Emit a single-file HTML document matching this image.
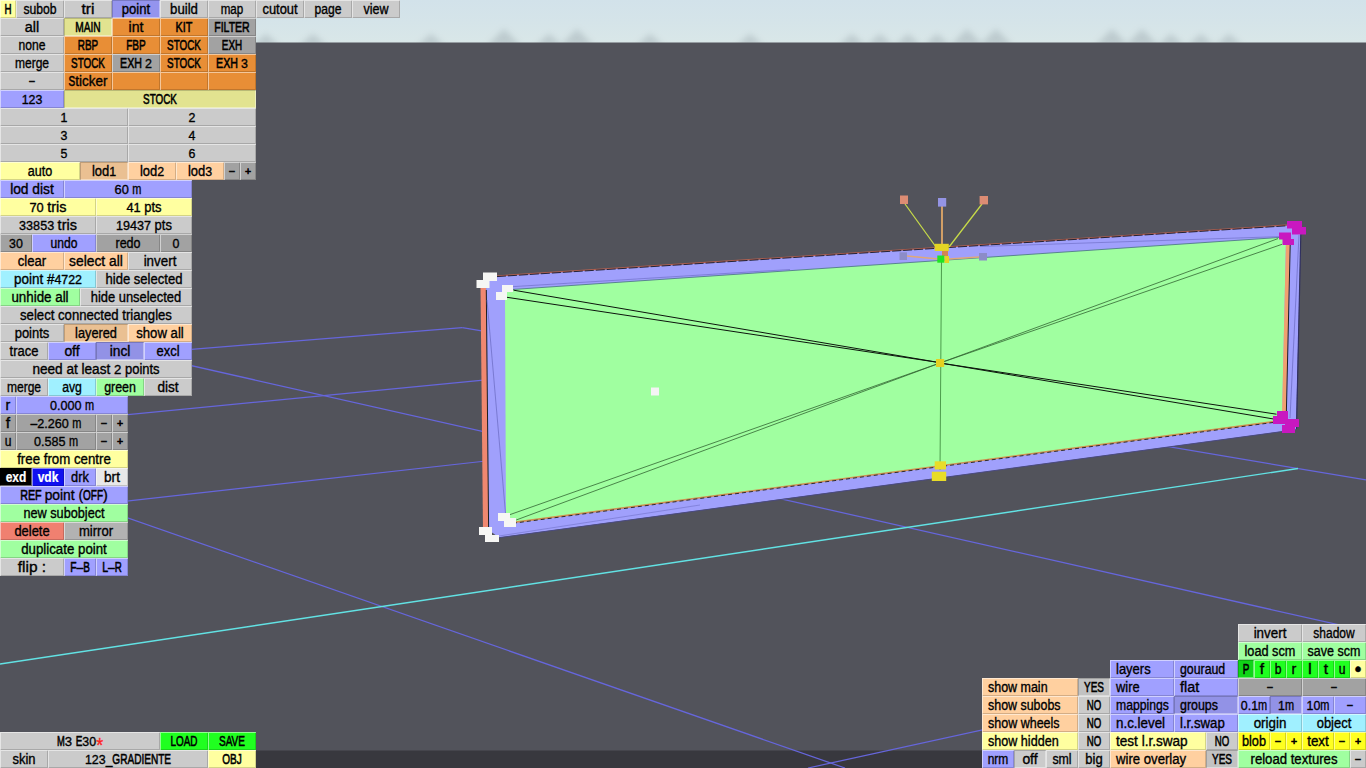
<!DOCTYPE html><html><head><meta charset="utf-8"><title>editor</title><style>

html,body{margin:0;padding:0;}
body{width:1366px;height:768px;overflow:hidden;position:relative;background:#52535b;font-family:"Liberation Sans","DejaVu Sans",sans-serif;}
#scene,#txt{position:absolute;left:0;top:0;width:1366px;height:768px;}
#txt text{font-family:"Liberation Sans","DejaVu Sans",sans-serif;white-space:pre;stroke:#000;stroke-width:.35px;paint-order:stroke;}
#txt .u{stroke-width:.55px;}
#txt .x{stroke-width:.6px;}
#txt text[font-weight]{stroke:#fff;stroke-width:.2px;}
.b{position:absolute;height:18px;box-sizing:border-box;
 box-shadow:inset 1px 1px 0 rgba(255,255,255,.5), inset -1px -1px 0 rgba(0,0,0,.17);}
.b.in{box-shadow:inset 1px 1px 0 rgba(0,0,0,.18), inset -1px -1px 0 rgba(255,255,255,.4);}
.g{background:#cbcbcb;}
.dg{background:#a2a2a2;}
.mg{background:#b2b2b2;}
.g2{background:#c2c2c2;}
.y{background:#ffffa0;}
.k{background:#e2e390;}
.o{background:#e88e36;}
.p{background:#a0a0ff;}
.dp{background:#9292e6;}
.p2{background:#9494ee;}
.pe{background:#ffd0a0;}
.dpe{background:#eac092;}
.c{background:#a0f0ff;}
.lg{background:#a0ffa0;}
.bg{background:#20ff20;}
.dbg{background:#10d418;}
.r{background:#f08070;}
.by{background:#ffff20;}
.bk{background:#000000;}
.bl{background:#1010f0;}
.lt{background:#e8e8e8;}

</style></head><body>
<svg id="scene" width="1366" height="768" viewBox="0 0 1366 768">
<defs>
<linearGradient id="sky" x1="0" y1="0" x2="0" y2="1"><stop offset="0" stop-color="#d2e2ea"/><stop offset="0.5" stop-color="#d5e4e9"/><stop offset="1" stop-color="#d9e7e8"/></linearGradient>
<filter id="bl" x="-20%" y="-50%" width="140%" height="200%"><feGaussianBlur stdDeviation="3.2"/></filter>
</defs>
<rect x="0" y="0" width="1366" height="768" fill="#52535b"/>
<rect x="0" y="0" width="1366" height="43" fill="url(#sky)"/>
<g filter="url(#bl)" fill="#98a4aa" opacity="0.42"><polygon points="252,46 266,34 280,46"/><polygon points="299,46 313,34 327,46"/><polygon points="417,46 431,34 445,46"/><polygon points="487,46 504,29 521,46"/><polygon points="535,46 549,34 563,46"/><polygon points="560,46 577,29 594,46"/><polygon points="636,46 650,34 664,46"/><polygon points="736,46 750,34 764,46"/><polygon points="838,46 852,34 866,46"/><polygon points="866,46 880,34 894,46"/><polygon points="894,46 908,34 922,46"/><polygon points="923,46 937,34 951,46"/><polygon points="950,46 967,29 984,46"/><polygon points="979,46 996,29 1013,46"/><polygon points="1095,46 1112,29 1129,46"/><polygon points="1125,46 1142,29 1159,46"/><polygon points="1157,46 1171,34 1185,46"/><polygon points="1187,46 1201,34 1215,46"/><polygon points="1215,46 1229,34 1243,46"/></g>
<rect x="0" y="42.5" width="1366" height="726" fill="#52535b"/>
<rect x="0" y="750.5" width="1366" height="18" fill="#38383e"/>
<line x1="0" y1="364.8" x2="462.3" y2="327.6" stroke="#6666dc" stroke-width="1.25" />
<line x1="0" y1="427.1" x2="486" y2="379.8" stroke="#6666dc" stroke-width="1.25" />
<line x1="0" y1="515.3" x2="486" y2="461" stroke="#6666dc" stroke-width="1.25" />
<line x1="462.3" y1="327.6" x2="1366" y2="480" stroke="#6666dc" stroke-width="1.25" />
<line x1="0" y1="322.4" x2="1366" y2="631" stroke="#6666dc" stroke-width="1.25" />
<line x1="0" y1="473.4" x2="845" y2="768" stroke="#6666dc" stroke-width="1.25" />
<line x1="808" y1="768" x2="1366" y2="646" stroke="#6666dc" stroke-width="1.25" />
<line x1="0" y1="664" x2="1298" y2="468.5" stroke="#62e2e4" stroke-width="1.4" />
<polygon points="480.5,286 486,277 488.5,530 483,530" fill="#f08870"/>
<polygon points="486,277 1301,224.6 1296,429.5 499,537.5 488.5,530" fill="#a0a0fc"/>
<line x1="486" y1="276.6" x2="1301" y2="224.2" stroke="#b06050" stroke-width="1.2" />
<line x1="486" y1="277.3" x2="1301" y2="224.9" stroke="#181828" stroke-width="0.9" stroke-dasharray="9 2"/>
<line x1="499" y1="537.7" x2="1296" y2="429.7" stroke="#4a4a80" stroke-width="1" />
<line x1="1301" y1="225" x2="1296.5" y2="429" stroke="#303060" stroke-width="1.2" />
<polygon points="505,290 1286,237 1282,420.5 506,523.4" fill="#a0ffa0"/>
<polygon points="1286,240 1290,240 1286,415 1282,415" fill="#f0a070"/>
<line x1="1290.3" y1="240" x2="1286.3" y2="415" stroke="#202020" stroke-width="1" />
<line x1="486.3" y1="290" x2="488.6" y2="527" stroke="#202020" stroke-width="1" />
<line x1="505" y1="290" x2="1286" y2="237" stroke="#507c88" stroke-width="0.9" />
<line x1="506" y1="523.4" x2="1282" y2="420.5" stroke="#d09050" stroke-width="1.6" />
<line x1="506" y1="524.2" x2="1282" y2="421.3" stroke="#202020" stroke-width="0.9" stroke-dasharray="4 3"/>
<line x1="487" y1="300" x2="505.5" y2="513" stroke="#6868c0" stroke-width="0.7" />
<line x1="1299" y1="235" x2="1290" y2="418" stroke="#6868c0" stroke-width="0.7" />
<line x1="513.6" y1="290.2" x2="939.5" y2="362.6" stroke="#0c140c" stroke-width="1" />
<line x1="505" y1="297" x2="939.5" y2="362.6" stroke="#0c140c" stroke-width="1" />
<line x1="940" y1="363" x2="1276.5" y2="414.2" stroke="#0c140c" stroke-width="1" />
<line x1="940" y1="363" x2="1273.6" y2="419" stroke="#0c140c" stroke-width="1" />
<line x1="940" y1="363" x2="1278" y2="238.6" stroke="#2c5c2c" stroke-width="0.75" />
<line x1="940" y1="363" x2="1282" y2="244.3" stroke="#2c5c2c" stroke-width="0.75" />
<line x1="510" y1="514.6" x2="940" y2="363" stroke="#2c5c2c" stroke-width="0.75" />
<line x1="516.2" y1="520" x2="940" y2="363" stroke="#2c5c2c" stroke-width="0.75" />
<line x1="507" y1="287" x2="790" y2="269.5" stroke="#7070c8" stroke-width="0.7" />
<line x1="1283" y1="236.5" x2="980" y2="246.5" stroke="#7070c8" stroke-width="0.7" />
<line x1="499" y1="536" x2="700" y2="505" stroke="#7070c8" stroke-width="0.6" />
<line x1="941.5" y1="262" x2="940" y2="470" stroke="#4c9c4c" stroke-width="1" />
<line x1="905" y1="204" x2="936" y2="247" stroke="#c8dc48" stroke-width="1.25" />
<line x1="982" y1="204" x2="949" y2="247" stroke="#c8dc48" stroke-width="1.25" />
<line x1="942" y1="206" x2="942" y2="246" stroke="#e0a868" stroke-width="1.8" />
<line x1="907" y1="256" x2="938" y2="259" stroke="#e0a878" stroke-width="1.3" />
<line x1="949" y1="259" x2="979" y2="257" stroke="#e0a878" stroke-width="1.3" />
<rect x="900" y="195.5" width="8.0" height="8.5" fill="#dc8c74"/>
<rect x="979.6" y="196" width="8.4" height="8.4" fill="#dc8c74"/>
<rect x="938" y="198" width="8.2" height="8.6" fill="#9494e4"/>
<rect x="899.5" y="252.3" width="7.5" height="7.7" fill="#8c8cc8"/>
<rect x="979" y="253" width="8.0" height="7.5" fill="#8c8cc8"/>
<rect x="934.7" y="243.8" width="14.1" height="7.2" fill="#e4d424"/>
<rect x="942" y="251" width="6.0" height="5.0" fill="#d48454"/>
<rect x="937.3" y="255.5" width="7.2" height="7.2" fill="#20e424"/>
<rect x="944.5" y="256" width="4.5" height="7.0" fill="#e4d424"/>
<rect x="936" y="359" width="8.2" height="8.0" fill="#e4d020"/>
<rect x="934.7" y="461.3" width="11.3" height="8.2" fill="#e8dc28"/>
<rect x="931.8" y="471.7" width="14.4" height="9.3" fill="#e8dc28"/>
<rect x="651" y="387.5" width="8.0" height="8.0" fill="#f4f4f4"/>
<rect x="483" y="272.5" width="14.0" height="8.5" fill="#f6f6f4"/>
<rect x="476.5" y="280" width="13.0" height="8.0" fill="#f6f6f4"/>
<rect x="502" y="285" width="11.0" height="7.0" fill="#f6f6f4"/>
<rect x="496" y="292" width="11.0" height="8.0" fill="#f6f6f4"/>
<rect x="479" y="527" width="13.0" height="8.0" fill="#f6f6f4"/>
<rect x="485" y="535" width="14.0" height="7.0" fill="#f6f6f4"/>
<rect x="498" y="513" width="12.0" height="8.0" fill="#f6f6f4"/>
<rect x="504" y="518" width="12.0" height="9.0" fill="#f6f6f4"/>
<rect x="1287" y="221" width="15.0" height="7.5" fill="#c818c0"/>
<rect x="1292" y="227" width="14.0" height="7.5" fill="#c818c0"/>
<rect x="1279" y="232.5" width="12.0" height="7.0" fill="#c818c0"/>
<rect x="1282.5" y="239" width="11.5" height="6.0" fill="#c818c0"/>
<rect x="1277" y="411" width="11.0" height="8.0" fill="#c818c0"/>
<rect x="1273" y="416" width="12.0" height="8.0" fill="#c818c0"/>
<rect x="1285" y="419" width="14.0" height="8.0" fill="#c818c0"/>
<rect x="1282" y="425" width="13.0" height="8.0" fill="#c818c0"/>
</svg>
<div class="b y" style="left:0px;top:0px;width:16px"></div>
<div class="b g" style="left:16px;top:0px;width:48px"></div>
<div class="b g" style="left:64px;top:0px;width:48px"></div>
<div class="b p2 in" style="left:112px;top:0px;width:48px"></div>
<div class="b g" style="left:160px;top:0px;width:48px"></div>
<div class="b g" style="left:208px;top:0px;width:48px"></div>
<div class="b g" style="left:256px;top:0px;width:48px"></div>
<div class="b g" style="left:304px;top:0px;width:48px"></div>
<div class="b g" style="left:352px;top:0px;width:48px"></div>
<div class="b g" style="left:0px;top:18px;width:64px"></div>
<div class="b k in" style="left:64px;top:18px;width:48px"></div>
<div class="b o" style="left:112px;top:18px;width:48px"></div>
<div class="b o" style="left:160px;top:18px;width:48px"></div>
<div class="b dg" style="left:208px;top:18px;width:48px"></div>
<div class="b g" style="left:0px;top:36px;width:64px"></div>
<div class="b o" style="left:64px;top:36px;width:48px"></div>
<div class="b o" style="left:112px;top:36px;width:48px"></div>
<div class="b o" style="left:160px;top:36px;width:48px"></div>
<div class="b dg" style="left:208px;top:36px;width:48px"></div>
<div class="b g" style="left:0px;top:54px;width:64px"></div>
<div class="b o" style="left:64px;top:54px;width:48px"></div>
<div class="b dg" style="left:112px;top:54px;width:48px"></div>
<div class="b o" style="left:160px;top:54px;width:48px"></div>
<div class="b o" style="left:208px;top:54px;width:48px"></div>
<div class="b g" style="left:0px;top:72px;width:64px"></div>
<div class="b o" style="left:64px;top:72px;width:48px"></div>
<div class="b o" style="left:112px;top:72px;width:48px"></div>
<div class="b o" style="left:160px;top:72px;width:48px"></div>
<div class="b o" style="left:208px;top:72px;width:48px"></div>
<div class="b p" style="left:0px;top:90px;width:64px"></div>
<div class="b k in" style="left:64px;top:90px;width:192px"></div>
<div class="b g" style="left:0px;top:108px;width:128px"></div>
<div class="b g" style="left:128px;top:108px;width:128px"></div>
<div class="b g" style="left:0px;top:126px;width:128px"></div>
<div class="b g" style="left:128px;top:126px;width:128px"></div>
<div class="b g" style="left:0px;top:144px;width:128px"></div>
<div class="b g" style="left:128px;top:144px;width:128px"></div>
<div class="b y" style="left:0px;top:162px;width:80px"></div>
<div class="b dpe in" style="left:80px;top:162px;width:48px"></div>
<div class="b pe" style="left:128px;top:162px;width:48px"></div>
<div class="b pe" style="left:176px;top:162px;width:48px"></div>
<div class="b dg" style="left:224px;top:162px;width:16px"></div>
<div class="b dg" style="left:240px;top:162px;width:16px"></div>
<div class="b p" style="left:0px;top:180px;width:64px"></div>
<div class="b p" style="left:64px;top:180px;width:128px"></div>
<div class="b y" style="left:0px;top:198px;width:96px"></div>
<div class="b y" style="left:96px;top:198px;width:96px"></div>
<div class="b g" style="left:0px;top:216px;width:96px"></div>
<div class="b g" style="left:96px;top:216px;width:96px"></div>
<div class="b dg" style="left:0px;top:234px;width:32px"></div>
<div class="b p" style="left:32px;top:234px;width:64px"></div>
<div class="b dg" style="left:96px;top:234px;width:64px"></div>
<div class="b dg" style="left:160px;top:234px;width:32px"></div>
<div class="b pe" style="left:0px;top:252px;width:64px"></div>
<div class="b pe" style="left:64px;top:252px;width:64px"></div>
<div class="b g" style="left:128px;top:252px;width:64px"></div>
<div class="b c" style="left:0px;top:270px;width:96px"></div>
<div class="b g" style="left:96px;top:270px;width:96px"></div>
<div class="b lg" style="left:0px;top:288px;width:80px"></div>
<div class="b g" style="left:80px;top:288px;width:112px"></div>
<div class="b g" style="left:0px;top:306px;width:192px"></div>
<div class="b g" style="left:0px;top:324px;width:64px"></div>
<div class="b dpe in" style="left:64px;top:324px;width:64px"></div>
<div class="b pe" style="left:128px;top:324px;width:64px"></div>
<div class="b g" style="left:0px;top:342px;width:48px"></div>
<div class="b p" style="left:48px;top:342px;width:48px"></div>
<div class="b dp in" style="left:96px;top:342px;width:48px"></div>
<div class="b p" style="left:144px;top:342px;width:48px"></div>
<div class="b g" style="left:0px;top:360px;width:192px"></div>
<div class="b g" style="left:0px;top:378px;width:48px"></div>
<div class="b c" style="left:48px;top:378px;width:48px"></div>
<div class="b lg" style="left:96px;top:378px;width:48px"></div>
<div class="b g" style="left:144px;top:378px;width:48px"></div>
<div class="b p" style="left:0px;top:396px;width:16px"></div>
<div class="b p" style="left:16px;top:396px;width:112px"></div>
<div class="b dg" style="left:0px;top:414px;width:16px"></div>
<div class="b dg" style="left:16px;top:414px;width:80px"></div>
<div class="b dg" style="left:96px;top:414px;width:16px"></div>
<div class="b dg" style="left:112px;top:414px;width:16px"></div>
<div class="b dg" style="left:0px;top:432px;width:16px"></div>
<div class="b dg" style="left:16px;top:432px;width:80px"></div>
<div class="b dg" style="left:96px;top:432px;width:16px"></div>
<div class="b dg" style="left:112px;top:432px;width:16px"></div>
<div class="b y" style="left:0px;top:450px;width:128px"></div>
<div class="b bk in" style="left:0px;top:468px;width:32px"></div>
<div class="b bl" style="left:32px;top:468px;width:32px"></div>
<div class="b p" style="left:64px;top:468px;width:32px"></div>
<div class="b lt" style="left:96px;top:468px;width:32px"></div>
<div class="b p" style="left:0px;top:486px;width:128px"></div>
<div class="b lg" style="left:0px;top:504px;width:128px"></div>
<div class="b r" style="left:0px;top:522px;width:64px"></div>
<div class="b mg" style="left:64px;top:522px;width:64px"></div>
<div class="b lg" style="left:0px;top:540px;width:128px"></div>
<div class="b g" style="left:0px;top:558px;width:64px"></div>
<div class="b p" style="left:64px;top:558px;width:32px"></div>
<div class="b p" style="left:96px;top:558px;width:32px"></div>
<div class="b g" style="left:0px;top:732px;width:160px"></div>
<div class="b bg" style="left:160px;top:732px;width:48px"></div>
<div class="b bg" style="left:208px;top:732px;width:48px"></div>
<div class="b g" style="left:0px;top:750px;width:48px"></div>
<div class="b g" style="left:48px;top:750px;width:160px"></div>
<div class="b y" style="left:208px;top:750px;width:48px"></div>
<div class="b g" style="left:1238px;top:624px;width:64px"></div>
<div class="b g" style="left:1302px;top:624px;width:64px"></div>
<div class="b lg" style="left:1238px;top:642px;width:64px"></div>
<div class="b lg" style="left:1302px;top:642px;width:64px"></div>
<div class="b p" style="left:1110px;top:660px;width:64px"></div>
<div class="b p" style="left:1174px;top:660px;width:64px"></div>
<div class="b dbg in" style="left:1238px;top:660px;width:16px"></div>
<div class="b bg" style="left:1254px;top:660px;width:16px"></div>
<div class="b bg" style="left:1270px;top:660px;width:16px"></div>
<div class="b bg" style="left:1286px;top:660px;width:16px"></div>
<div class="b bg" style="left:1302px;top:660px;width:16px"></div>
<div class="b bg" style="left:1318px;top:660px;width:16px"></div>
<div class="b bg" style="left:1334px;top:660px;width:16px"></div>
<div class="b y" style="left:1350px;top:660px;width:16px"></div>
<div class="b pe" style="left:982px;top:678px;width:96px"></div>
<div class="b g2 in" style="left:1078px;top:678px;width:32px"></div>
<div class="b p" style="left:1110px;top:678px;width:64px"></div>
<div class="b p" style="left:1174px;top:678px;width:64px"></div>
<div class="b dg" style="left:1238px;top:678px;width:64px"></div>
<div class="b dg" style="left:1302px;top:678px;width:64px"></div>
<div class="b pe" style="left:982px;top:696px;width:96px"></div>
<div class="b g" style="left:1078px;top:696px;width:32px"></div>
<div class="b p" style="left:1110px;top:696px;width:64px"></div>
<div class="b dp in" style="left:1174px;top:696px;width:64px"></div>
<div class="b p" style="left:1238px;top:696px;width:32px"></div>
<div class="b dp in" style="left:1270px;top:696px;width:32px"></div>
<div class="b p" style="left:1302px;top:696px;width:32px"></div>
<div class="b p" style="left:1334px;top:696px;width:32px"></div>
<div class="b pe" style="left:982px;top:714px;width:96px"></div>
<div class="b g" style="left:1078px;top:714px;width:32px"></div>
<div class="b p" style="left:1110px;top:714px;width:64px"></div>
<div class="b p" style="left:1174px;top:714px;width:64px"></div>
<div class="b c" style="left:1238px;top:714px;width:64px"></div>
<div class="b c" style="left:1302px;top:714px;width:64px"></div>
<div class="b y" style="left:982px;top:732px;width:96px"></div>
<div class="b g" style="left:1078px;top:732px;width:32px"></div>
<div class="b y" style="left:1110px;top:732px;width:96px"></div>
<div class="b g" style="left:1206px;top:732px;width:32px"></div>
<div class="b by" style="left:1238px;top:732px;width:32px"></div>
<div class="b by" style="left:1270px;top:732px;width:16px"></div>
<div class="b by" style="left:1286px;top:732px;width:16px"></div>
<div class="b by" style="left:1302px;top:732px;width:32px"></div>
<div class="b by" style="left:1334px;top:732px;width:16px"></div>
<div class="b by" style="left:1350px;top:732px;width:16px"></div>
<div class="b p" style="left:982px;top:750px;width:32px"></div>
<div class="b g in" style="left:1014px;top:750px;width:32px"></div>
<div class="b g" style="left:1046px;top:750px;width:32px"></div>
<div class="b g" style="left:1078px;top:750px;width:32px"></div>
<div class="b pe" style="left:1110px;top:750px;width:96px"></div>
<div class="b g2 in" style="left:1206px;top:750px;width:32px"></div>
<div class="b lg" style="left:1238px;top:750px;width:112px"></div>
<div class="b g" style="left:1350px;top:750px;width:16px"></div>
<svg id="txt" width="1366" height="768" viewBox="0 0 1366 768" lengthAdjust="spacingAndGlyphs">
<text y="13.7" fill="#000"><tspan lengthAdjust="spacingAndGlyphs" x="4.48" font-size="13.8" textLength="7.04" class="u">H</tspan></text>
<text y="13.7" fill="#000"><tspan lengthAdjust="spacingAndGlyphs" x="23.40" font-size="14" textLength="33.19">subob</tspan></text>
<text y="13.7" fill="#000"><tspan lengthAdjust="spacingAndGlyphs" x="81.51" font-size="14" textLength="12.99">tri</tspan></text>
<text y="13.7" fill="#000"><tspan lengthAdjust="spacingAndGlyphs" x="121.81" font-size="14" textLength="28.39">point</tspan></text>
<text y="13.7" fill="#000"><tspan lengthAdjust="spacingAndGlyphs" x="170.05" font-size="14" textLength="27.90">build</tspan></text>
<text y="13.7" fill="#000"><tspan lengthAdjust="spacingAndGlyphs" x="220.70" font-size="14" textLength="22.60">map</tspan></text>
<text y="13.7" fill="#000"><tspan lengthAdjust="spacingAndGlyphs" x="262.44" font-size="14" textLength="35.12">cutout</tspan></text>
<text y="13.7" fill="#000"><tspan lengthAdjust="spacingAndGlyphs" x="314.53" font-size="14" textLength="26.94">page</tspan></text>
<text y="13.7" fill="#000"><tspan lengthAdjust="spacingAndGlyphs" x="363.50" font-size="14" textLength="25.00">view</tspan></text>
<text y="31.7" fill="#000"><tspan lengthAdjust="spacingAndGlyphs" x="24.78" font-size="14" textLength="14.43">all</tspan></text>
<text y="31.7" fill="#000"><tspan lengthAdjust="spacingAndGlyphs" x="75.29" font-size="13.8" textLength="25.43" class="u">MAIN</tspan></text>
<text y="31.7" fill="#000"><tspan lengthAdjust="spacingAndGlyphs" x="128.54" font-size="14" textLength="14.92">int</tspan></text>
<text y="31.7" fill="#000"><tspan lengthAdjust="spacingAndGlyphs" x="175.59" font-size="13.8" textLength="16.82" class="u">KIT</tspan></text>
<text y="31.7" fill="#000"><tspan lengthAdjust="spacingAndGlyphs" x="214.27" font-size="13.8" textLength="35.46" class="u">FILTER</tspan></text>
<text y="49.7" fill="#000"><tspan lengthAdjust="spacingAndGlyphs" x="18.53" font-size="14" textLength="26.94">none</tspan></text>
<text y="49.7" fill="#000"><tspan lengthAdjust="spacingAndGlyphs" x="77.83" font-size="13.8" textLength="20.35" class="u">RBP</tspan></text>
<text y="49.7" fill="#000"><tspan lengthAdjust="spacingAndGlyphs" x="126.22" font-size="13.8" textLength="19.56" class="u">FBP</tspan></text>
<text y="49.7" fill="#000"><tspan lengthAdjust="spacingAndGlyphs" x="167.05" font-size="13.8" textLength="33.91" class="u">STOCK</tspan></text>
<text y="49.7" fill="#000"><tspan lengthAdjust="spacingAndGlyphs" x="221.83" font-size="13.8" textLength="20.35" class="u">EXH</tspan></text>
<text y="67.7" fill="#000"><tspan lengthAdjust="spacingAndGlyphs" x="14.93" font-size="14" textLength="34.14">merge</tspan></text>
<text y="67.7" fill="#000"><tspan lengthAdjust="spacingAndGlyphs" x="71.05" font-size="13.8" textLength="33.91" class="u">STOCK</tspan></text>
<text y="67.7" fill="#000"><tspan lengthAdjust="spacingAndGlyphs" x="120.12" font-size="13.8" textLength="24.85" class="u">EXH </tspan><tspan lengthAdjust="spacingAndGlyphs" x="144.98" font-size="13.6" textLength="6.90">2</tspan></text>
<text y="67.7" fill="#000"><tspan lengthAdjust="spacingAndGlyphs" x="167.05" font-size="13.8" textLength="33.91" class="u">STOCK</tspan></text>
<text y="67.7" fill="#000"><tspan lengthAdjust="spacingAndGlyphs" x="216.12" font-size="13.8" textLength="24.85" class="u">EXH </tspan><tspan lengthAdjust="spacingAndGlyphs" x="240.98" font-size="13.6" textLength="6.90">3</tspan></text>
<text y="85.7" fill="#000"><tspan lengthAdjust="spacingAndGlyphs" x="29.30" font-size="13" textLength="5.40" class="x" dy="-0.9">–</tspan></text>
<text y="85.7" fill="#000"><tspan lengthAdjust="spacingAndGlyphs" x="68.56" font-size="13.8" textLength="6.65" class="u">S</tspan><tspan lengthAdjust="spacingAndGlyphs" x="75.21" font-size="14" textLength="32.22">ticker</tspan></text>
<text y="103.7" fill="#000"><tspan lengthAdjust="spacingAndGlyphs" x="21.66" font-size="13.6" textLength="20.69">123</tspan></text>
<text y="103.7" fill="#000"><tspan lengthAdjust="spacingAndGlyphs" x="143.05" font-size="13.8" textLength="33.91" class="u">STOCK</tspan></text>
<text y="121.7" fill="#000"><tspan lengthAdjust="spacingAndGlyphs" x="60.55" font-size="13.6" textLength="6.90">1</tspan></text>
<text y="121.7" fill="#000"><tspan lengthAdjust="spacingAndGlyphs" x="188.55" font-size="13.6" textLength="6.90">2</tspan></text>
<text y="139.7" fill="#000"><tspan lengthAdjust="spacingAndGlyphs" x="60.55" font-size="13.6" textLength="6.90">3</tspan></text>
<text y="139.7" fill="#000"><tspan lengthAdjust="spacingAndGlyphs" x="188.55" font-size="13.6" textLength="6.90">4</tspan></text>
<text y="157.7" fill="#000"><tspan lengthAdjust="spacingAndGlyphs" x="60.55" font-size="13.6" textLength="6.90">5</tspan></text>
<text y="157.7" fill="#000"><tspan lengthAdjust="spacingAndGlyphs" x="188.55" font-size="13.6" textLength="6.90">6</tspan></text>
<text y="175.7" fill="#000"><tspan lengthAdjust="spacingAndGlyphs" x="27.73" font-size="14" textLength="24.54">auto</tspan></text>
<text y="175.7" fill="#000"><tspan lengthAdjust="spacingAndGlyphs" x="91.89" font-size="14" textLength="17.32">lod</tspan><tspan lengthAdjust="spacingAndGlyphs" x="109.21" font-size="13.6" textLength="6.90">1</tspan></text>
<text y="175.7" fill="#000"><tspan lengthAdjust="spacingAndGlyphs" x="139.89" font-size="14" textLength="17.32">lod</tspan><tspan lengthAdjust="spacingAndGlyphs" x="157.21" font-size="13.6" textLength="6.90">2</tspan></text>
<text y="175.7" fill="#000"><tspan lengthAdjust="spacingAndGlyphs" x="187.89" font-size="14" textLength="17.32">lod</tspan><tspan lengthAdjust="spacingAndGlyphs" x="205.21" font-size="13.6" textLength="6.90">3</tspan></text>
<text y="175.7" fill="#000"><tspan lengthAdjust="spacingAndGlyphs" x="229.30" font-size="13" textLength="5.40" class="x" dy="-0.9">–</tspan></text>
<text y="175.7" fill="#000"><tspan lengthAdjust="spacingAndGlyphs" x="244.93" font-size="10.5" textLength="6.13" class="x" dy="-0.9">+</tspan></text>
<text y="193.7" fill="#000"><tspan lengthAdjust="spacingAndGlyphs" x="10.14" font-size="14" textLength="43.72">lod dist</tspan></text>
<text y="193.7" fill="#000"><tspan lengthAdjust="spacingAndGlyphs" x="114.52" font-size="13.6" textLength="17.84">60 </tspan><tspan lengthAdjust="spacingAndGlyphs" x="132.36" font-size="14" textLength="9.13">m</tspan></text>
<text y="211.7" fill="#000"><tspan lengthAdjust="spacingAndGlyphs" x="29.46" font-size="13.6" textLength="17.84">70 </tspan><tspan lengthAdjust="spacingAndGlyphs" x="47.30" font-size="14" textLength="19.24">tris</tspan></text>
<text y="211.7" fill="#000"><tspan lengthAdjust="spacingAndGlyphs" x="126.42" font-size="13.6" textLength="17.84">41 </tspan><tspan lengthAdjust="spacingAndGlyphs" x="144.26" font-size="14" textLength="17.32">pts</tspan></text>
<text y="229.7" fill="#000"><tspan lengthAdjust="spacingAndGlyphs" x="19.12" font-size="13.6" textLength="38.53">33853 </tspan><tspan lengthAdjust="spacingAndGlyphs" x="57.64" font-size="14" textLength="19.24">tris</tspan></text>
<text y="229.7" fill="#000"><tspan lengthAdjust="spacingAndGlyphs" x="116.08" font-size="13.6" textLength="38.53">19437 </tspan><tspan lengthAdjust="spacingAndGlyphs" x="154.61" font-size="14" textLength="17.32">pts</tspan></text>
<text y="247.7" fill="#000"><tspan lengthAdjust="spacingAndGlyphs" x="9.10" font-size="13.6" textLength="13.79">30</tspan></text>
<text y="247.7" fill="#000"><tspan lengthAdjust="spacingAndGlyphs" x="50.53" font-size="14" textLength="26.94">undo</tspan></text>
<text y="247.7" fill="#000"><tspan lengthAdjust="spacingAndGlyphs" x="115.49" font-size="14" textLength="25.01">redo</tspan></text>
<text y="247.7" fill="#000"><tspan lengthAdjust="spacingAndGlyphs" x="172.55" font-size="13.6" textLength="6.90">0</tspan></text>
<text y="265.7" fill="#000"><tspan lengthAdjust="spacingAndGlyphs" x="17.81" font-size="14" textLength="28.38">clear</tspan></text>
<text y="265.7" fill="#000"><tspan lengthAdjust="spacingAndGlyphs" x="69.09" font-size="14" textLength="53.82">select all</tspan></text>
<text y="265.7" fill="#000"><tspan lengthAdjust="spacingAndGlyphs" x="143.65" font-size="14" textLength="32.71">invert</tspan></text>
<text y="283.7" fill="#000"><tspan lengthAdjust="spacingAndGlyphs" x="14.03" font-size="14" textLength="40.35">point #</tspan><tspan lengthAdjust="spacingAndGlyphs" x="54.38" font-size="13.6" textLength="27.59">4722</tspan></text>
<text y="283.7" fill="#000"><tspan lengthAdjust="spacingAndGlyphs" x="105.55" font-size="14" textLength="76.91">hide selected</tspan></text>
<text y="301.7" fill="#000"><tspan lengthAdjust="spacingAndGlyphs" x="11.40" font-size="14" textLength="57.19">unhide all</tspan></text>
<text y="301.7" fill="#000"><tspan lengthAdjust="spacingAndGlyphs" x="90.81" font-size="14" textLength="90.38">hide unselected</tspan></text>
<text y="319.7" fill="#000"><tspan lengthAdjust="spacingAndGlyphs" x="20.06" font-size="14" textLength="151.88">select connected triangles</tspan></text>
<text y="337.7" fill="#000"><tspan lengthAdjust="spacingAndGlyphs" x="14.68" font-size="14" textLength="34.64">points</tspan></text>
<text y="337.7" fill="#000"><tspan lengthAdjust="spacingAndGlyphs" x="75.08" font-size="14" textLength="41.85">layered</tspan></text>
<text y="337.7" fill="#000"><tspan lengthAdjust="spacingAndGlyphs" x="136.22" font-size="14" textLength="47.55">show all</tspan></text>
<text y="355.7" fill="#000"><tspan lengthAdjust="spacingAndGlyphs" x="9.57" font-size="14" textLength="28.86">trace</tspan></text>
<text y="355.7" fill="#000"><tspan lengthAdjust="spacingAndGlyphs" x="64.38" font-size="14" textLength="15.24">off</tspan></text>
<text y="355.7" fill="#000"><tspan lengthAdjust="spacingAndGlyphs" x="109.66" font-size="14" textLength="20.68">incl</tspan></text>
<text y="355.7" fill="#000"><tspan lengthAdjust="spacingAndGlyphs" x="156.46" font-size="14" textLength="23.08">excl</tspan></text>
<text y="373.7" fill="#000"><tspan lengthAdjust="spacingAndGlyphs" x="32.41" font-size="14" textLength="81.60">need at least </tspan><tspan lengthAdjust="spacingAndGlyphs" x="114.01" font-size="13.6" textLength="10.94">2 </tspan><tspan lengthAdjust="spacingAndGlyphs" x="124.95" font-size="14" textLength="34.64">points</tspan></text>
<text y="391.7" fill="#000"><tspan lengthAdjust="spacingAndGlyphs" x="6.93" font-size="14" textLength="34.14">merge</tspan></text>
<text y="391.7" fill="#000"><tspan lengthAdjust="spacingAndGlyphs" x="62.14" font-size="14" textLength="19.72">avg</tspan></text>
<text y="391.7" fill="#000"><tspan lengthAdjust="spacingAndGlyphs" x="104.13" font-size="14" textLength="31.75">green</tspan></text>
<text y="391.7" fill="#000"><tspan lengthAdjust="spacingAndGlyphs" x="157.42" font-size="14" textLength="21.17">dist</tspan></text>
<text y="409.7" fill="#000"><tspan lengthAdjust="spacingAndGlyphs" x="5.60" font-size="14" textLength="4.81">r</tspan></text>
<text y="409.7" fill="#000"><tspan lengthAdjust="spacingAndGlyphs" x="49.90" font-size="13.6" textLength="35.08">0.000 </tspan><tspan lengthAdjust="spacingAndGlyphs" x="84.97" font-size="14" textLength="9.13">m</tspan></text>
<text y="427.7" fill="#000"><tspan lengthAdjust="spacingAndGlyphs" x="5.83" font-size="14" textLength="4.33">f</tspan></text>
<text y="427.7" fill="#000"><tspan lengthAdjust="spacingAndGlyphs" x="30.53" font-size="14" textLength="6.74">–</tspan><tspan lengthAdjust="spacingAndGlyphs" x="37.27" font-size="13.6" textLength="35.08">2.260 </tspan><tspan lengthAdjust="spacingAndGlyphs" x="72.34" font-size="14" textLength="9.13">m</tspan></text>
<text y="427.7" fill="#000"><tspan lengthAdjust="spacingAndGlyphs" x="101.30" font-size="13" textLength="5.40" class="x" dy="-0.9">–</tspan></text>
<text y="427.7" fill="#000"><tspan lengthAdjust="spacingAndGlyphs" x="116.93" font-size="10.5" textLength="6.13" class="x" dy="-0.9">+</tspan></text>
<text y="445.7" fill="#000"><tspan lengthAdjust="spacingAndGlyphs" x="4.63" font-size="14" textLength="6.74">u</tspan></text>
<text y="445.7" fill="#000"><tspan lengthAdjust="spacingAndGlyphs" x="33.90" font-size="13.6" textLength="35.08">0.585 </tspan><tspan lengthAdjust="spacingAndGlyphs" x="68.97" font-size="14" textLength="9.13">m</tspan></text>
<text y="445.7" fill="#000"><tspan lengthAdjust="spacingAndGlyphs" x="101.30" font-size="13" textLength="5.40" class="x" dy="-0.9">–</tspan></text>
<text y="445.7" fill="#000"><tspan lengthAdjust="spacingAndGlyphs" x="116.93" font-size="10.5" textLength="6.13" class="x" dy="-0.9">+</tspan></text>
<text y="463.7" fill="#000"><tspan lengthAdjust="spacingAndGlyphs" x="17.17" font-size="14" textLength="93.66">free from centre</tspan></text>
<text y="481.7" fill="#fff" font-weight="bold"><tspan lengthAdjust="spacingAndGlyphs" x="5.66" font-size="14" textLength="20.68">exd</tspan></text>
<text y="481.7" fill="#fff" font-weight="bold"><tspan lengthAdjust="spacingAndGlyphs" x="37.66" font-size="14" textLength="20.68">vdk</tspan></text>
<text y="481.7" fill="#000"><tspan lengthAdjust="spacingAndGlyphs" x="71.10" font-size="14" textLength="17.79">drk</tspan></text>
<text y="481.7" fill="#000"><tspan lengthAdjust="spacingAndGlyphs" x="104.06" font-size="14" textLength="15.87">brt</tspan></text>
<text y="499.7" fill="#000"><tspan lengthAdjust="spacingAndGlyphs" x="20.18" font-size="13.8" textLength="24.46" class="u">REF </tspan><tspan lengthAdjust="spacingAndGlyphs" x="44.64" font-size="14" textLength="38.42">point (</tspan><tspan lengthAdjust="spacingAndGlyphs" x="83.06" font-size="13.8" textLength="19.95" class="u">OFF</tspan><tspan lengthAdjust="spacingAndGlyphs" x="103.01" font-size="14" textLength="4.81">)</tspan></text>
<text y="517.7" fill="#000"><tspan lengthAdjust="spacingAndGlyphs" x="23.39" font-size="14" textLength="81.23">new subobject</tspan></text>
<text y="535.7" fill="#000"><tspan lengthAdjust="spacingAndGlyphs" x="14.44" font-size="14" textLength="35.12">delete</tspan></text>
<text y="535.7" fill="#000"><tspan lengthAdjust="spacingAndGlyphs" x="78.93" font-size="14" textLength="34.13">mirror</tspan></text>
<text y="553.7" fill="#000"><tspan lengthAdjust="spacingAndGlyphs" x="21.21" font-size="14" textLength="85.57">duplicate point</tspan></text>
<text y="571.7" fill="#000"><tspan lengthAdjust="spacingAndGlyphs" x="17.84" font-size="14" textLength="28.33">flip :</tspan></text>
<text y="571.7" fill="#000"><tspan lengthAdjust="spacingAndGlyphs" x="70.18" font-size="13.8" textLength="6.26" class="u">F</tspan><tspan lengthAdjust="spacingAndGlyphs" x="76.43" font-size="14" textLength="6.74">–</tspan><tspan lengthAdjust="spacingAndGlyphs" x="83.17" font-size="13.8" textLength="6.65" class="u">B</tspan></text>
<text y="571.7" fill="#000"><tspan lengthAdjust="spacingAndGlyphs" x="102.18" font-size="13.8" textLength="5.87" class="u">L</tspan><tspan lengthAdjust="spacingAndGlyphs" x="108.05" font-size="14" textLength="6.74">–</tspan><tspan lengthAdjust="spacingAndGlyphs" x="114.78" font-size="13.8" textLength="7.04" class="u">R</tspan></text>
<text y="745.7" fill="#000"><tspan lengthAdjust="spacingAndGlyphs" x="56.92" font-size="13.8" textLength="7.82" class="u">M</tspan><tspan lengthAdjust="spacingAndGlyphs" x="64.74" font-size="13.6" textLength="10.94">3 </tspan><tspan lengthAdjust="spacingAndGlyphs" x="75.69" font-size="13.8" textLength="6.65" class="u">E</tspan><tspan lengthAdjust="spacingAndGlyphs" x="82.34" font-size="13.6" textLength="13.79">30</tspan><tspan lengthAdjust="spacingAndGlyphs" x="96.13" font-size="21" textLength="6.95" fill="#ff2020" stroke="#ff2020" dy="6">*</tspan></text>
<text y="745.7" fill="#000"><tspan lengthAdjust="spacingAndGlyphs" x="170.50" font-size="13.8" textLength="27.00" class="u">LOAD</tspan></text>
<text y="745.7" fill="#000"><tspan lengthAdjust="spacingAndGlyphs" x="218.96" font-size="13.8" textLength="26.09" class="u">SAVE</tspan></text>
<text y="763.7" fill="#000"><tspan lengthAdjust="spacingAndGlyphs" x="12.46" font-size="14" textLength="23.08">skin</tspan></text>
<text y="763.7" fill="#000"><tspan lengthAdjust="spacingAndGlyphs" x="84.95" font-size="13.6" textLength="20.69">123</tspan><tspan lengthAdjust="spacingAndGlyphs" x="105.64" font-size="14" textLength="6.74">_</tspan><tspan lengthAdjust="spacingAndGlyphs" x="112.37" font-size="13.8" textLength="58.68" class="u">GRADIENTE</tspan></text>
<text y="763.7" fill="#000"><tspan lengthAdjust="spacingAndGlyphs" x="222.22" font-size="13.8" textLength="19.56" class="u">OBJ</tspan></text>
<text y="637.7" fill="#000"><tspan lengthAdjust="spacingAndGlyphs" x="1253.65" font-size="14" textLength="32.71">invert</tspan></text>
<text y="637.7" fill="#000"><tspan lengthAdjust="spacingAndGlyphs" x="1313.32" font-size="14" textLength="41.36">shadow</tspan></text>
<text y="655.7" fill="#000"><tspan lengthAdjust="spacingAndGlyphs" x="1244.54" font-size="14" textLength="50.91">load scm</tspan></text>
<text y="655.7" fill="#000"><tspan lengthAdjust="spacingAndGlyphs" x="1307.59" font-size="14" textLength="52.83">save scm</tspan></text>
<text y="673.7" fill="#000"><tspan lengthAdjust="spacingAndGlyphs" x="1116.00" font-size="14" textLength="34.63">layers</tspan></text>
<text y="673.7" fill="#000"><tspan lengthAdjust="spacingAndGlyphs" x="1180.00" font-size="14" textLength="45.22">gouraud</tspan></text>
<text y="673.7" fill="#000"><tspan lengthAdjust="spacingAndGlyphs" x="1242.67" font-size="13.8" textLength="6.65" class="u">P</tspan></text>
<text y="673.7" fill="#000"><tspan lengthAdjust="spacingAndGlyphs" x="1259.83" font-size="14" textLength="4.33">f</tspan></text>
<text y="673.7" fill="#000"><tspan lengthAdjust="spacingAndGlyphs" x="1274.63" font-size="14" textLength="6.74">b</tspan></text>
<text y="673.7" fill="#000"><tspan lengthAdjust="spacingAndGlyphs" x="1291.60" font-size="14" textLength="4.81">r</tspan></text>
<text y="673.7" fill="#000"><tspan lengthAdjust="spacingAndGlyphs" x="1308.08" font-size="14" textLength="3.85">l</tspan></text>
<text y="673.7" fill="#000"><tspan lengthAdjust="spacingAndGlyphs" x="1323.83" font-size="14" textLength="4.33">t</tspan></text>
<text y="673.7" fill="#000"><tspan lengthAdjust="spacingAndGlyphs" x="1338.63" font-size="14" textLength="6.74">u</tspan></text>
<text y="673.7" fill="#000"><tspan lengthAdjust="spacingAndGlyphs" x="1354.50" font-size="20" textLength="7.00" dy="2.6">•</tspan></text>
<text y="691.7" fill="#000"><tspan lengthAdjust="spacingAndGlyphs" x="988.00" font-size="14" textLength="59.57">show main</tspan></text>
<text y="691.7" fill="#000"><tspan lengthAdjust="spacingAndGlyphs" x="1084.02" font-size="13.8" textLength="19.96" class="u">YES</tspan></text>
<text y="691.7" fill="#000"><tspan lengthAdjust="spacingAndGlyphs" x="1116.00" font-size="14" textLength="23.56">wire</tspan></text>
<text y="691.7" fill="#000"><tspan lengthAdjust="spacingAndGlyphs" x="1180.00" font-size="14" textLength="19.25">flat</tspan></text>
<text y="691.7" fill="#000"><tspan lengthAdjust="spacingAndGlyphs" x="1267.30" font-size="13" textLength="5.40" class="x" dy="-0.9">–</tspan></text>
<text y="691.7" fill="#000"><tspan lengthAdjust="spacingAndGlyphs" x="1331.30" font-size="13" textLength="5.40" class="x" dy="-0.9">–</tspan></text>
<text y="709.7" fill="#000"><tspan lengthAdjust="spacingAndGlyphs" x="988.00" font-size="14" textLength="72.56">show subobs</tspan></text>
<text y="709.7" fill="#000"><tspan lengthAdjust="spacingAndGlyphs" x="1086.76" font-size="13.8" textLength="14.47" class="u">NO</tspan></text>
<text y="709.7" fill="#000"><tspan lengthAdjust="spacingAndGlyphs" x="1116.00" font-size="14" textLength="52.90">mappings</tspan></text>
<text y="709.7" fill="#000"><tspan lengthAdjust="spacingAndGlyphs" x="1180.00" font-size="14" textLength="38.00">groups</tspan></text>
<text y="709.7" fill="#000"><tspan lengthAdjust="spacingAndGlyphs" x="1240.82" font-size="13.6" textLength="17.24">0.1</tspan><tspan lengthAdjust="spacingAndGlyphs" x="1258.06" font-size="14" textLength="9.13">m</tspan></text>
<text y="709.7" fill="#000"><tspan lengthAdjust="spacingAndGlyphs" x="1277.99" font-size="13.6" textLength="6.90">1</tspan><tspan lengthAdjust="spacingAndGlyphs" x="1284.88" font-size="14" textLength="9.13">m</tspan></text>
<text y="709.7" fill="#000"><tspan lengthAdjust="spacingAndGlyphs" x="1306.54" font-size="13.6" textLength="13.79">10</tspan><tspan lengthAdjust="spacingAndGlyphs" x="1320.33" font-size="14" textLength="9.13">m</tspan></text>
<text y="709.7" fill="#000"><tspan lengthAdjust="spacingAndGlyphs" x="1347.30" font-size="13" textLength="5.40" class="x" dy="-0.9">–</tspan></text>
<text y="727.7" fill="#000"><tspan lengthAdjust="spacingAndGlyphs" x="988.00" font-size="14" textLength="71.60">show wheels</tspan></text>
<text y="727.7" fill="#000"><tspan lengthAdjust="spacingAndGlyphs" x="1086.76" font-size="13.8" textLength="14.47" class="u">NO</tspan></text>
<text y="727.7" fill="#000"><tspan lengthAdjust="spacingAndGlyphs" x="1116.00" font-size="14" textLength="49.07">n.c.level</tspan></text>
<text y="727.7" fill="#000"><tspan lengthAdjust="spacingAndGlyphs" x="1180.00" font-size="14" textLength="44.73">l.r.swap</tspan></text>
<text y="727.7" fill="#000"><tspan lengthAdjust="spacingAndGlyphs" x="1253.64" font-size="14" textLength="32.71">origin</tspan></text>
<text y="727.7" fill="#000"><tspan lengthAdjust="spacingAndGlyphs" x="1316.68" font-size="14" textLength="34.64">object</tspan></text>
<text y="745.7" fill="#000"><tspan lengthAdjust="spacingAndGlyphs" x="988.00" font-size="14" textLength="70.65">show hidden</tspan></text>
<text y="745.7" fill="#000"><tspan lengthAdjust="spacingAndGlyphs" x="1086.76" font-size="13.8" textLength="14.47" class="u">NO</tspan></text>
<text y="745.7" fill="#000"><tspan lengthAdjust="spacingAndGlyphs" x="1116.00" font-size="14" textLength="71.61">test l.r.swap</tspan></text>
<text y="745.7" fill="#000"><tspan lengthAdjust="spacingAndGlyphs" x="1214.76" font-size="13.8" textLength="14.47" class="u">NO</tspan></text>
<text y="745.7" fill="#000"><tspan lengthAdjust="spacingAndGlyphs" x="1241.97" font-size="14" textLength="24.06">blob</tspan></text>
<text y="745.7" fill="#000"><tspan lengthAdjust="spacingAndGlyphs" x="1275.30" font-size="13" textLength="5.40" class="x" dy="-0.9">–</tspan></text>
<text y="745.7" fill="#000"><tspan lengthAdjust="spacingAndGlyphs" x="1290.93" font-size="10.5" textLength="6.13" class="x" dy="-0.9">+</tspan></text>
<text y="745.7" fill="#000"><tspan lengthAdjust="spacingAndGlyphs" x="1307.18" font-size="14" textLength="21.65">text</tspan></text>
<text y="745.7" fill="#000"><tspan lengthAdjust="spacingAndGlyphs" x="1339.30" font-size="13" textLength="5.40" class="x" dy="-0.9">–</tspan></text>
<text y="745.7" fill="#000"><tspan lengthAdjust="spacingAndGlyphs" x="1354.93" font-size="10.5" textLength="6.13" class="x" dy="-0.9">+</tspan></text>
<text y="763.7" fill="#000"><tspan lengthAdjust="spacingAndGlyphs" x="987.67" font-size="14" textLength="20.67">nrm</tspan></text>
<text y="763.7" fill="#000"><tspan lengthAdjust="spacingAndGlyphs" x="1022.38" font-size="14" textLength="15.24">off</tspan></text>
<text y="763.7" fill="#000"><tspan lengthAdjust="spacingAndGlyphs" x="1052.39" font-size="14" textLength="19.23">sml</tspan></text>
<text y="763.7" fill="#000"><tspan lengthAdjust="spacingAndGlyphs" x="1085.34" font-size="14" textLength="17.32">big</tspan></text>
<text y="763.7" fill="#000"><tspan lengthAdjust="spacingAndGlyphs" x="1116.00" font-size="14" textLength="70.15">wire overlay</tspan></text>
<text y="763.7" fill="#000"><tspan lengthAdjust="spacingAndGlyphs" x="1212.02" font-size="13.8" textLength="19.96" class="u">YES</tspan></text>
<text y="763.7" fill="#000"><tspan lengthAdjust="spacingAndGlyphs" x="1250.50" font-size="14" textLength="87.00">reload textures</tspan></text>
<text y="763.7" fill="#000"><tspan lengthAdjust="spacingAndGlyphs" x="1355.30" font-size="13" textLength="5.40" class="x" dy="-0.9">–</tspan></text>
</svg>
</body></html>
